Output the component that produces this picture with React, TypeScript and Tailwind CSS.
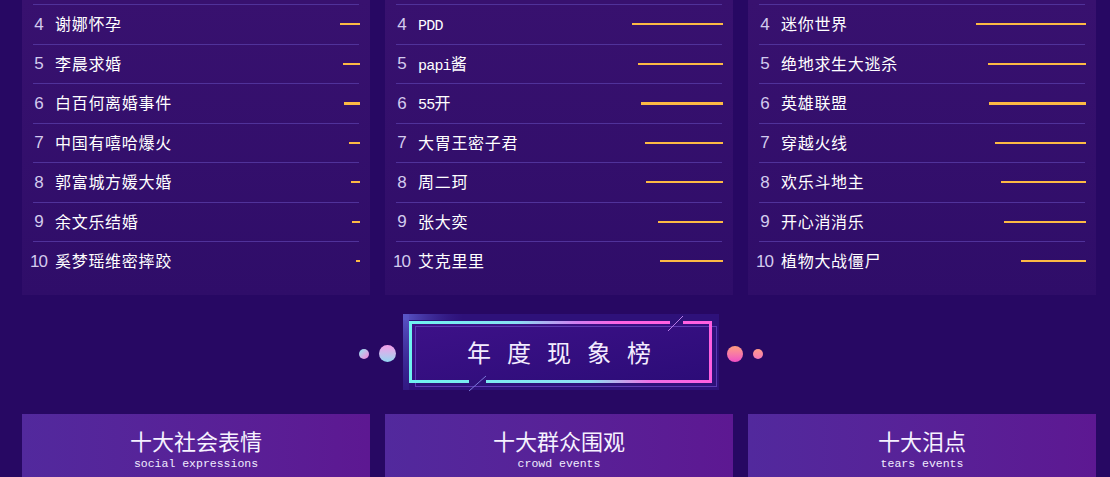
import React from 'react';

type Item = { rank: number; name: string; bar: number };

const socialList: Item[] = [
  { rank: 4, name: '谢娜怀孕', bar: 20 },
  { rank: 5, name: '李晨求婚', bar: 17 },
  { rank: 6, name: '白百何离婚事件', bar: 16 },
  { rank: 7, name: '中国有嘻哈爆火', bar: 11 },
  { rank: 8, name: '郭富城方媛大婚', bar: 9 },
  { rank: 9, name: '余文乐结婚', bar: 8 },
  { rank: 10, name: '奚梦瑶维密摔跤', bar: 4 },
];

const peopleList: Item[] = [
  { rank: 4, name: 'PDD', bar: 91 },
  { rank: 5, name: 'papi酱', bar: 85 },
  { rank: 6, name: '55开', bar: 82 },
  { rank: 7, name: '大胃王密子君', bar: 78 },
  { rank: 8, name: '周二珂', bar: 77 },
  { rank: 9, name: '张大奕', bar: 65 },
  { rank: 10, name: '艾克里里', bar: 63 },
];

const gameList: Item[] = [
  { rank: 4, name: '迷你世界', bar: 110 },
  { rank: 5, name: '绝地求生大逃杀', bar: 98 },
  { rank: 6, name: '英雄联盟', bar: 97 },
  { rank: 7, name: '穿越火线', bar: 91 },
  { rank: 8, name: '欢乐斗地主', bar: 85 },
  { rank: 9, name: '开心消消乐', bar: 82 },
  { rank: 10, name: '植物大战僵尸', bar: 65 },
];

const cards = [
  { title: '十大社会表情', sub: 'social expressions' },
  { title: '十大群众围观', sub: 'crowd events' },
  { title: '十大泪点', sub: 'tears events' },
];

// latin runs use a narrower mono face, like the original bitmap font
function ItemName({ name }: { name: string }) {
  const parts = name.split(/([A-Za-z0-9]+)/).filter(Boolean);
  return (
    <span className="text-[16px] tracking-[0.7px] text-white font-['Noto_Sans_CJK_SC',sans-serif] leading-none">
      {parts.map((p, i) =>
        /^[A-Za-z0-9]+$/.test(p) ? (
          <span key={i} className="font-['Liberation_Mono',monospace] text-[15px] tracking-[-0.8px]">
            {p}
          </span>
        ) : (
          <span key={i}>{p}</span>
        )
      )}
    </span>
  );
}

function RankPanel({ items }: { items: Item[] }) {
  return (
    <div className="w-[348px] h-[295px] pt-[4px] bg-linear-to-b from-[#38116f] to-[#2f0d69]">
      {items.map((item) => (
        <div
          key={item.rank}
          className="mx-[11px] h-[39.5px] border-t border-[#50329a] flex items-center"
        >
          <span className="w-[11px] flex justify-center shrink-0 text-[17px] tracking-[-1px] text-[#d3cbee] font-['Liberation_Sans',sans-serif] leading-none">
            {item.rank}
          </span>
          <div className="ml-[11px] flex-1">
            <ItemName name={item.name} />
          </div>
          <span
            className={`-mr-[1px] bg-[#fdb944] ${item.rank === 6 ? 'h-[3px]' : 'h-[2px]'}`}
            style={{ width: item.bar }}
          />
        </div>
      ))}
    </div>
  );
}

function Banner() {
  return (
    <div className="relative w-[316px] h-[76px] flex items-center justify-center">
      <svg className="absolute inset-0 overflow-visible" width="316" height="76" viewBox="0 0 316 76">
        <defs>
          <linearGradient id="glowL" x1="0" y1="0" x2="0" y2="1">
            <stop offset="0" stopColor="#5a56c8" />
            <stop offset="1" stopColor="#3a2a98" stopOpacity="0.3" />
          </linearGradient>
          <linearGradient id="glowT" x1="0" y1="0" x2="1" y2="0">
            <stop offset="0" stopColor="#5a56c8" />
            <stop offset="1" stopColor="#3a2a98" stopOpacity="0" />
          </linearGradient>
          <linearGradient id="fill" x1="0" y1="0" x2="1" y2="1">
            <stop offset="0" stopColor="#3d1188" />
            <stop offset="1" stopColor="#2c0c78" />
          </linearGradient>
          <linearGradient id="topLine" gradientUnits="userSpaceOnUse" x1="8" y1="0" x2="308" y2="0">
            <stop offset="0" stopColor="#6ff2f0" />
            <stop offset="0.35" stopColor="#88e0f2" />
            <stop offset="0.55" stopColor="#d07ef0" />
            <stop offset="0.7" stopColor="#ff62e2" />
            <stop offset="1" stopColor="#ff5fe0" />
          </linearGradient>
          <linearGradient id="botLine" gradientUnits="userSpaceOnUse" x1="8" y1="0" x2="308" y2="0">
            <stop offset="0" stopColor="#6ff2f0" />
            <stop offset="0.6" stopColor="#90def2" />
            <stop offset="0.8" stopColor="#f06ee6" />
            <stop offset="1" stopColor="#ff5fe0" />
          </linearGradient>
        </defs>
        <rect x="0" y="0" width="316" height="76" fill="#2e117a" />
        <rect x="0" y="0" width="6" height="76" fill="url(#glowL)" />
        <rect x="0" y="0" width="60" height="6" fill="url(#glowT)" />
        <rect x="9" y="10" width="297" height="56" fill="url(#fill)" />
        <rect x="12.5" y="12.5" width="301" height="60" fill="none" stroke="#5d3ab2" strokeWidth="1" />
        <g strokeWidth="3" fill="none">
          <line x1="6" y1="8.5" x2="267" y2="8.5" stroke="url(#topLine)" />
          <line x1="280" y1="8.5" x2="309" y2="8.5" stroke="url(#topLine)" />
          <line x1="307.5" y1="7" x2="307.5" y2="69" stroke="#ff5fe0" />
          <line x1="309" y1="67.5" x2="83" y2="67.5" stroke="url(#botLine)" />
          <line x1="66" y1="67.5" x2="6" y2="67.5" stroke="url(#botLine)" />
          <line x1="7.5" y1="69" x2="7.5" y2="7" stroke="#6ff2f0" />
        </g>
        <line x1="280" y1="2" x2="265" y2="17" stroke="#b77ae6" strokeWidth="1" />
        <line x1="83" y1="62" x2="66" y2="77" stroke="#7a78d8" strokeWidth="1" />
      </svg>
      <span className="relative -ml-[4px] mr-[-16px] -mt-[1px] text-[24px] tracking-[16px] text-[#f3ecff] font-['Noto_Sans_CJK_SC',sans-serif] leading-none">
        年度现象榜
      </span>
    </div>
  );
}

export default function App() {
  return (
    <div className="w-[1110px] h-[477px] overflow-hidden bg-[#270863] pl-[22px]">
      <div className="w-[1074px]">
        <div className="flex gap-[15px]">
          <RankPanel items={socialList} />
          <RankPanel items={peopleList} />
          <RankPanel items={gameList} />
        </div>

        {/* 年度现象榜 heading */}
        <div className="mt-[19px] pl-[4px] flex items-center justify-center">
          <span className="mt-[3px] w-[10px] h-[10px] rounded-full bg-linear-to-br from-[#7ee8f2] to-[#f27ad8]" />
          <span className="mt-[3px] ml-[10px] w-[17px] h-[17px] rounded-full bg-linear-to-b from-[#f29ce8] to-[#8fd6f2]" />
          <div className="ml-[7px]">
            <Banner />
          </div>
          <span className="mt-[3px] ml-[8px] w-[16px] h-[16px] rounded-full bg-linear-to-b from-[#ff9c7e] to-[#f04cc4]" />
          <span className="mt-[3px] ml-[10px] w-[10px] h-[10px] rounded-full bg-linear-to-b from-[#ff9a88] to-[#f576b8]" />
        </div>

        <div className="mt-[24px] flex gap-[15px]">
          {cards.map((card) => (
            <div
              key={card.title}
              className="w-[348px] h-[80px] pt-[13px] bg-linear-to-r from-[#52299d] to-[#5d1892] flex flex-col items-center"
            >
              <div className="text-[22px] leading-[26px] text-[#f6f2ff] font-['Noto_Sans_CJK_SC',sans-serif]">
                {card.title}
              </div>
              <div className="mt-[4px] text-[11.5px] leading-[14px] text-[#f0ecff] font-['Liberation_Mono',monospace]">
                {card.sub}
              </div>
            </div>
          ))}
        </div>
      </div>
    </div>
  );
}
